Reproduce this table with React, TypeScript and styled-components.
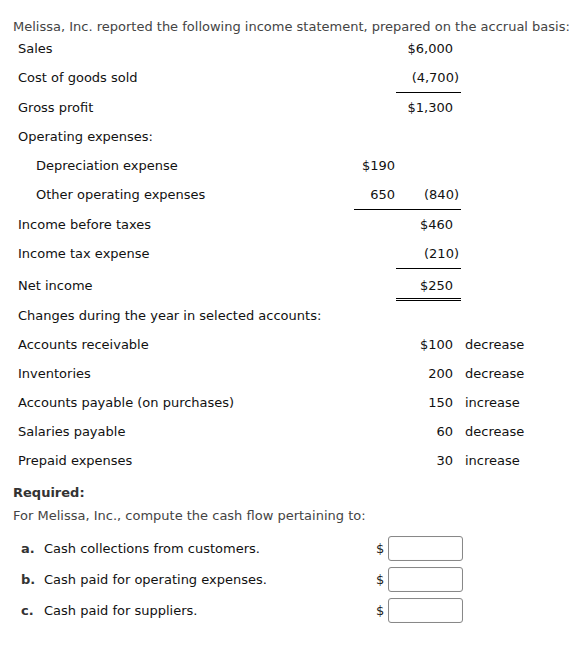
import React from 'react'
import styled, { createGlobalStyle } from 'styled-components'

const GlobalStyle = createGlobalStyle`
  html, body { margin: 0; padding: 0; background: #fff; }
  body { font-family: Verdana, "DejaVu Sans", sans-serif; font-size: 13px; color: #333; }
`

type Line = {
  label: string
  indent?: boolean
  inner?: string
  outer?: string
  note?: string
  rule?: 'inner' | 'outer' | 'double'
}

const lines: Line[] = [
  { label: 'Sales', outer: '$6,000' },
  { label: 'Cost of goods sold', outer: '(4,700)', rule: 'outer' },
  { label: 'Gross profit', outer: '$1,300' },
  { label: 'Operating expenses:' },
  { label: 'Depreciation expense', indent: true, inner: '$190' },
  { label: 'Other operating expenses', indent: true, inner: '650', outer: '(840)', rule: 'inner' },
  { label: 'Income before taxes', outer: '$460' },
  { label: 'Income tax expense', outer: '(210)', rule: 'outer' },
  { label: 'Net income', outer: '$250', rule: 'double' },
  { label: 'Changes during the year in selected accounts:' },
  { label: 'Accounts receivable', outer: '$100', note: 'decrease' },
  { label: 'Inventories', outer: '200', note: 'decrease' },
  { label: 'Accounts payable (on purchases)', outer: '150', note: 'increase' },
  { label: 'Salaries payable', outer: '60', note: 'decrease' },
  { label: 'Prepaid expenses', outer: '30', note: 'increase' },
]

const questions = [
  { key: 'a.', text: 'Cash collections from customers.' },
  { key: 'b.', text: 'Cash paid for operating expenses.' },
  { key: 'c.', text: 'Cash paid for suppliers.' },
]

const Page = styled.div`
  padding: 19px 0 0 13px;
`

const Intro = styled.p`
  margin: 0;
  line-height: 15px;
  color: #444;
`

const Statement = styled.div`
  display: grid;
  grid-template-columns: 336px 42px 65px auto;
  margin: 0 0 0 5px;
  color: #111;
`

const Cell = styled.div<{ $rule?: 'single' | 'double' | 'none'; $tall?: boolean }>`
  height: ${p => (p.$tall ? '26px' : '29px')};
  padding-top: ${p => (p.$tall ? '3px' : '0')};
  line-height: ${p => (p.$tall ? '27px' : '29px')};
  white-space: nowrap;
  border-bottom: ${p =>
    p.$rule === 'single' ? '1px solid #000' : p.$rule === 'double' ? '3px double #000' : 'none'};
`

const Label = styled(Cell)<{ $indent?: boolean }>`
  padding-left: ${p => (p.$indent ? '18px' : '0')};
`

const Inner = styled(Cell)`
  text-align: right;
  padding-right: 1px;
`

const Outer = styled(Cell)`
  text-align: right;
  padding-right: 8px;
`

const Note = styled(Cell)`
  padding-left: 4px;
`

const Paren = styled.span`
  margin-right: -6px;
`

const Required = styled.div`
  margin-top: 10px;
  font-weight: bold;
  line-height: 16px;
  color: #333;
`

const Task = styled.p`
  margin: 7px 0 0;
  line-height: 16px;
  color: #444;
`

const Questions = styled.div`
  display: flex;
  flex-direction: column;
  gap: 6px;
  margin-top: 12px;
  padding-left: 8px;
`

const Question = styled.div`
  display: grid;
  grid-template-columns: 23px 332px auto;
  align-items: center;
  height: 25px;
  color: #111;
`

const Key = styled.span`
  font-weight: bold;
  color: #333;
`

const Answer = styled.label`
  display: flex;
  align-items: center;
  font-size: 13px;
  color: #222;
`

const Box = styled.input`
  box-sizing: border-box;
  width: 75px;
  height: 25px;
  margin: 0 0 0 4px;
  border: 1px solid #888;
  border-radius: 3px;
  box-shadow: inset 0 0 1px rgba(0, 0, 0, 0.15);
  font: inherit;
  outline: none;
`

function amount(value?: string) {
  if (!value) return null
  if (value.endsWith(')')) {
    return (
      <>
        {value.slice(0, -1)}
        <Paren>)</Paren>
      </>
    )
  }
  return value
}

export default function App() {
  return (
    <Page>
      <GlobalStyle />
      <Intro>Melissa, Inc. reported the following income statement, prepared on the accrual basis:</Intro>
      <Statement>
        {lines.map(l => {
          const tall = l.rule === 'double'
          return (
            <React.Fragment key={l.label}>
              <Label $indent={l.indent} $tall={tall}>
                {l.label}
              </Label>
              <Inner $rule={l.rule === 'inner' ? 'single' : 'none'}>{l.inner}</Inner>
              <Outer
                $tall={tall}
                $rule={
                  l.rule === 'inner' || l.rule === 'outer' ? 'single' : l.rule === 'double' ? 'double' : 'none'
                }
              >
                {amount(l.outer)}
              </Outer>
              <Note>{l.note}</Note>
            </React.Fragment>
          )
        })}
      </Statement>
      <Required>Required:</Required>
      <Task>For Melissa, Inc., compute the cash flow pertaining to:</Task>
      <Questions>
        {questions.map(q => (
          <Question key={q.key}>
            <Key>{q.key}</Key>
            <span>{q.text}</span>
            <Answer>
              $<Box type="text" />
            </Answer>
          </Question>
        ))}
      </Questions>
    </Page>
  )
}
